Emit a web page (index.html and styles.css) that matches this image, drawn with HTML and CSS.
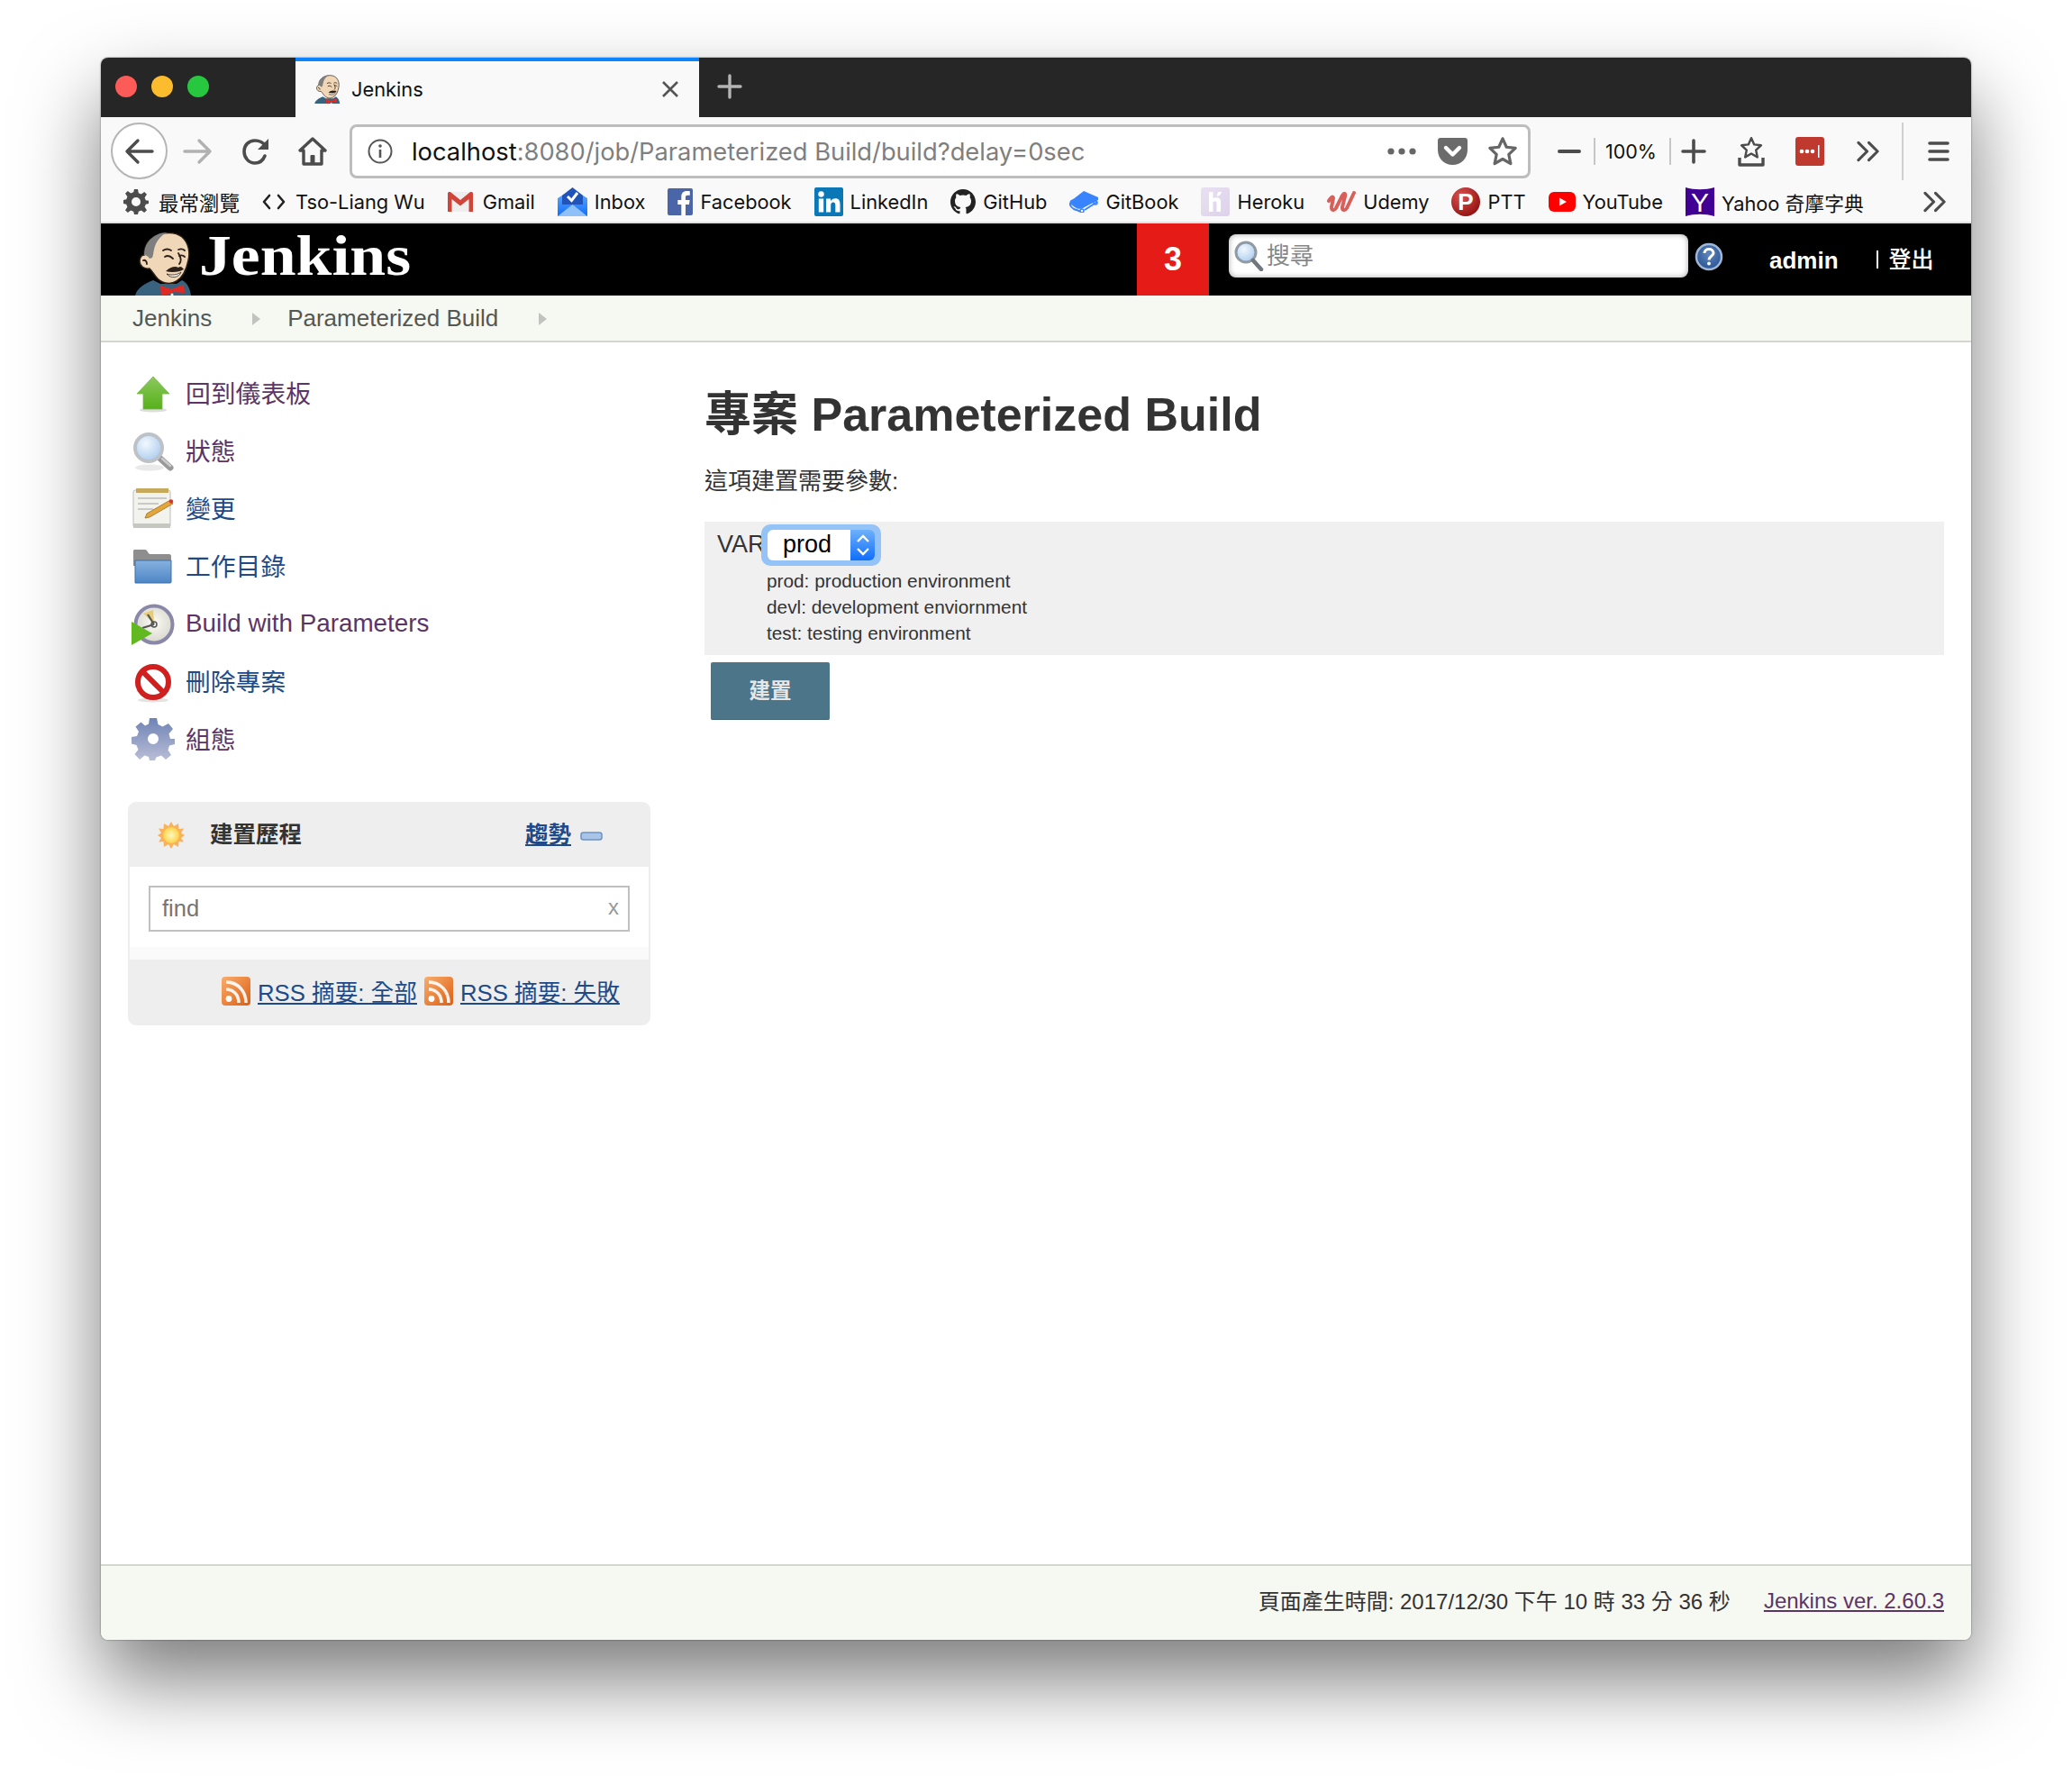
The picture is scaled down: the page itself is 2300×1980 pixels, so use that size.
FILE: index.html
```html
<!DOCTYPE html>
<html lang="zh-Hant">
<head>
    <meta charset="UTF-8">
    <title>Jenkins</title>
    <link rel="stylesheet" href="styles.css">
</head>
<body>
<svg class="defs" width="0" height="0">
    <defs>
        <linearGradient id="gGreen" x1="0" y1="0" x2="0" y2="1"><stop offset="0" stop-color="#8cc85e"/><stop offset="1" stop-color="#56b01a"/></linearGradient>
        <linearGradient id="gFolder" x1="0" y1="0" x2="0" y2="1"><stop offset="0" stop-color="#86b1de"/><stop offset="1" stop-color="#4d86c6"/></linearGradient>
        <linearGradient id="gGear" x1="0" y1="0" x2="0" y2="1"><stop offset="0" stop-color="#6f83b5"/><stop offset="1" stop-color="#b9bdd6"/></linearGradient>
        <linearGradient id="gRss" x1="0" y1="0" x2="1" y2="1"><stop offset="0" stop-color="#f9ad6c"/><stop offset="1" stop-color="#dc5f14"/></linearGradient>
        <linearGradient id="gBlue" x1="0" y1="0" x2="0" y2="1"><stop offset="0" stop-color="#5da7fb"/><stop offset="1" stop-color="#0f6efb"/></linearGradient>
        <linearGradient id="gHero" x1="0" y1="0" x2="1" y2="1"><stop offset="0" stop-color="#e9e1f2"/><stop offset="1" stop-color="#ddd2ea"/></linearGradient>
        <radialGradient id="gLens" cx=".4" cy=".35" r=".7"><stop offset="0" stop-color="#f2f8fe"/><stop offset="1" stop-color="#a9cbee"/></radialGradient>
        <radialGradient id="gSun" cx=".5" cy=".5" r=".5"><stop offset="0" stop-color="#fff9c4"/><stop offset="1" stop-color="#fbd348"/></radialGradient>
        <radialGradient id="gPtt" cx=".35" cy=".3" r=".8"><stop offset="0" stop-color="#d9534f"/><stop offset="1" stop-color="#8e0d0d"/></radialGradient>
        <radialGradient id="gHelp" cx=".5" cy=".4" r=".6"><stop offset="0" stop-color="#5f86bc"/><stop offset="1" stop-color="#2a5494"/></radialGradient>
        <radialGradient id="gClock" cx=".5" cy=".45" r=".55"><stop offset="0" stop-color="#fbfaf4"/><stop offset="1" stop-color="#d9d8cf"/></radialGradient>
        <symbol id="butler" viewBox="0 0 65 71">
            <path fill="#38627e" d="M2 71C4 63 12 58 22 54L30 58H48L54 54C60 57 63 63 64 71Z"/>
            <path fill="#f0d7b8" stroke="#2b1f18" stroke-width="1.500" d="M16 12C24 1 44-2 54 6C62 13 63 24 61 32C59 42 56 50 48 55C40 60 30 57 25 50C22 46 20 43 18 41C12 42 7 38 7 33C7 28 10 26 12 26C12 21 13 16 16 12Z"/>
            <path fill="#7f7f7f" d="M16 12C22 4 30 1 38 1C31 4 25 10 23 20C22 24 22 27 21 29L18 30C16 27 14 26 12 26C12 21 13 16 16 12Z"/>
            <path fill="none" stroke="#2b1f18" stroke-width="1.800" stroke-linecap="round" d="M33 21C36 19 39 19 42 21M50 20C53 19 55 19 57 21M35 28C38 26 41 27 44 30M51 27C53 26 55 26 57 28M50 24C53 29 54 33 51 36M11 32C13 31 15 33 15 36"/>
            <path fill="#2b1f18" d="M36 44C41 39 47 38 50 40C52 38 54 39 56 42C51 45 43 46 36 44Z"/>
            <path fill="#f7f7f2" stroke="#2b1f18" stroke-width=".8" d="M37 47C43 49 49 48 53 45C51 51 42 53 37 47Z"/>
            <path fill="#e12a22" d="M30 60L42 64L56 59L57 68L44 67L42 69L31 71Z"/>
            <circle cx="43" cy="70" r="1.500" fill="#eee"/>
        </symbol>
        <symbol id="bigstar" viewBox="0 0 36 36"><path fill="none" stroke="currentColor" stroke-width="3.400" stroke-linejoin="round" d="M18 3L22.500 13L33 14.200L25.200 21.600L27.400 32.400L18 27L8.600 32.400L10.800 21.600L3 14.200L13.500 13Z"/></symbol>
        <symbol id="chevrons" viewBox="0 0 28 24"><path fill="none" stroke="#4d4d4d" stroke-width="3.200" stroke-linecap="round" stroke-linejoin="round" d="M2 2L12 12L2 22M14 2L24 12L14 22"/></symbol>
        <symbol id="rss" viewBox="0 0 32 32">
            <rect width="32" height="32" rx="4" fill="url(#gRss)"/>
            <circle cx="8" cy="24.500" r="3.400" fill="#fff"/>
            <path fill="none" stroke="#fff" stroke-width="3.600" d="M5 14C13 14 19 20 19 29M5 6C18 6 27 16 27 29" opacity=".9"/>
        </symbol>
    </defs>
</svg>

<div class="window">
    <div class="tabbar">
        <div class="lights">
            <span class="light red"></span>
            <span class="light yellow"></span>
            <span class="light green"></span>
        </div>
        <div class="tab">
            <svg class="favicon" width="30" height="32"><use href="#butler"/></svg>
            <span class="tab-title">Jenkins</span>
            <svg class="tab-close" width="20" height="20" viewBox="0 0 20 20"><path stroke="#555" stroke-width="2.600" d="M2 2L18 18M18 2L2 18"/></svg>
        </div>
        <svg class="newtab" width="28" height="28" viewBox="0 0 28 28"><path stroke="#b4b4b4" stroke-width="3.400" stroke-linecap="round" d="M14 2V26M2 14H26"/></svg>
    </div>

    <div class="toolbar">
        <div class="backbtn">
            <svg width="34" height="30" viewBox="0 0 34 30"><path fill="none" stroke="#4c4c4c" stroke-width="3.400" stroke-linecap="round" stroke-linejoin="round" d="M31 15H3M15 3L3 15L15 27"/></svg>
        </div>
        <svg class="tb-fwd" width="34" height="30" viewBox="0 0 34 30"><path fill="none" stroke="#b1b1b1" stroke-width="3.400" stroke-linecap="round" stroke-linejoin="round" d="M3 15H31M19 3L31 15L19 27"/></svg>
        <svg class="tb-reload" width="32" height="32" viewBox="0 0 32 32"><path fill="none" stroke="#4c4c4c" stroke-width="3.600" stroke-linecap="round" d="M26 21C24 26 20 29 15 29C8 29 3 23 3 16C3 9 8 4 15 4C20 4 24 6 27 10"/><path fill="#4c4c4c" d="M30 2V14H18Z"/></svg>
        <svg class="tb-home" width="32" height="32" viewBox="0 0 32 32"><path fill="none" stroke="#4c4c4c" stroke-width="3.400" stroke-linejoin="round" d="M2 15L16 2L30 15H26V30H6V15Z"/><rect x="13.500" y="20" width="5" height="10" rx="1" fill="#4c4c4c"/></svg>
        <div class="urlbar">
            <svg class="info" width="30" height="30" viewBox="0 0 30 30"><circle cx="15" cy="15" r="12.500" fill="none" stroke="#555" stroke-width="2"/><circle cx="15" cy="9" r="1.800" fill="#555"/><path stroke="#555" stroke-width="2.600" d="M15 13V22"/></svg>
            <span class="url"><b>localhost</b>:8080/job/Parameterized Build/build?delay=0sec</span>
            <svg class="ub-dots" width="32" height="8" viewBox="0 0 32 8"><circle cx="4" cy="4" r="3.600" fill="#666"/><circle cx="16" cy="4" r="3.600" fill="#666"/><circle cx="28" cy="4" r="3.600" fill="#666"/></svg>
            <svg class="ub-pocket" width="33" height="30" viewBox="0 0 33 30"><path fill="#6b6b6b" d="M3 0H30C32 0 33 1 33 3V13C33 23 26 30 16.500 30C7 30 0 23 0 13V3C0 1 1 0 3 0Z"/><path fill="none" stroke="#fff" stroke-width="4.400" stroke-linecap="round" stroke-linejoin="round" d="M9 11L16.500 18.500L24 11"/></svg>
            <svg class="ub-star" width="34" height="34"><use href="#bigstar"/></svg>
        </div>
        <svg class="zm-minus" width="26" height="4" viewBox="0 0 26 4"><rect width="26" height="4" rx="2" fill="#4c4c4c"/></svg>
        <span class="zm-sep"></span>
        <span class="zm-val">100%</span>
        <span class="zm-sep"></span>
        <svg class="zm-plus" width="28" height="28" viewBox="0 0 28 28"><path stroke="#4c4c4c" stroke-width="3.600" stroke-linecap="round" d="M14 2V26M2 14H26"/></svg>
        <svg class="tb-lib" width="30" height="34" viewBox="0 0 30 34"><use href="#bigstar" width="26" height="26" x="2" y="0"/><path fill="none" stroke="#4c4c4c" stroke-width="3.400" stroke-linejoin="round" d="M2 24V32H28V24"/></svg>
        <svg class="tb-lp" width="32" height="32" viewBox="0 0 32 32"><rect width="32" height="32" rx="3" fill="#c0392f"/><circle cx="7" cy="16" r="2.300" fill="#fff"/><circle cx="13" cy="16" r="2.300" fill="#fff"/><circle cx="19" cy="16" r="2.300" fill="#fff"/><rect x="25" y="9" width="1.500" height="14" fill="#fff"/></svg>
        <svg class="tb-more" width="27" height="24"><use href="#chevrons"/></svg>
        <span class="tb-sep"></span>
        <svg class="tb-menu" width="24" height="22" viewBox="0 0 24 22"><path stroke="#4c4c4c" stroke-width="3.600" stroke-linecap="round" d="M2 2H22M2 11H22M2 20H22"/></svg>
    </div>

    <div class="bookmarks">
        <span class="bm bm-wide">
            <svg class="bm-gear" width="28" height="28" viewBox="0 0 28 28"><path fill="#4c4c4c" fill-rule="evenodd" d="M12 0H16L16.800 4.200L19.800 5.400L23.300 3L26 5.800L23.600 9.200L24.800 12.200L28 12.800V16L24.800 16.800L23.600 19.800L26 23.200L23.200 26L19.800 23.600L16.800 24.800L16 28H12L11.200 24.800L8.200 23.600L4.800 26L2 23.200L4.400 19.800L3.200 16.800L0 16V12L3.200 11.200L4.400 8.200L2 4.800L4.800 2L8.200 4.400L11.200 3.200ZM14 9A5 5 0 1 0 14 19A5 5 0 1 0 14 9Z"/></svg>
            <span class="bm-cjk">最常瀏覽</span>
        </span>
        <span class="bm bm-wide">
            <svg class="bm-code" width="26" height="20" viewBox="0 0 26 20"><path fill="none" stroke="#222" stroke-width="2.600" stroke-linecap="round" stroke-linejoin="round" d="M8 3L2 10L8 17M18 3L24 10L18 17"/></svg>
            Tso-Liang Wu
        </span>
        <span class="bm bm-wide">
            <svg width="28" height="22" viewBox="0 0 28 22"><rect width="28" height="22" rx="2" fill="#eee"/><path fill="#d0443a" d="M0 2C0 0 2-.5 3.500.5L14 9L24.500.5C26-.5 28 0 28 2V22H23.500V8L14 15.500L4.500 8V22H0Z"/></svg>
            Gmail
        </span>
        <span class="bm">
            <svg width="33" height="32" viewBox="0 0 33 32"><path fill="url(#gBlue)" d="M0 12L8 7V19H25V7L33 12V32H0Z"/><path fill="#8fc1f8" d="M0 32L16.500 19L33 32Z"/><path fill="#2154b9" d="M16.500 0L28 9V19H5V9Z"/><path fill="none" stroke="#fff" stroke-width="3" d="M11 10L15.500 14.500L22 6"/></svg>
            Inbox
        </span>
        <span class="bm">
            <svg width="28" height="30" viewBox="0 0 28 30"><rect width="28" height="30" rx="2" fill="#4a66a8"/><path fill="#fff" d="M20 30V18H24L24.600 13H20V10C20 8.600 20.400 7.700 22.400 7.700H24.800V3.300C24.400 3.200 23 3 21.300 3C17.700 3 15.300 5.200 15.300 9.200V13H11.300V18H15.300V30Z"/></svg>
            Facebook
        </span>
        <span class="bm">
            <svg width="32" height="32" viewBox="0 0 32 32"><rect width="32" height="32" rx="2" fill="#0a77b7"/><circle cx="7.500" cy="7.500" r="3.200" fill="#fff"/><rect x="4.800" y="12.500" width="5.400" height="15" fill="#fff"/><path fill="#fff" d="M13 12.500H18V15C19 13.300 21 12.200 23.200 12.200C27.300 12.200 28.500 14.900 28.500 18.800V27.500H23.300V19.800C23.300 17.800 22.700 16.500 21 16.500C19 16.500 18.200 17.900 18.200 19.800V27.500H13Z"/></svg>
            LinkedIn
        </span>
        <span class="bm">
            <svg width="28" height="30" viewBox="0 0 28 30"><path fill="#222" d="M14 1C6.300 1 0 7.300 0 15C0 21.200 4 26.400 9.600 28.300C10.300 28.400 10.500 28 10.500 27.600V25C6.600 25.900 5.800 23.300 5.800 23.300C5.200 21.700 4.200 21.200 4.200 21.200C3 20.300 4.300 20.300 4.300 20.300C5.700 20.400 6.400 21.700 6.400 21.700C7.600 23.800 9.700 23.200 10.500 22.800C10.600 21.900 11 21.300 11.400 21C8.300 20.600 5 19.400 5 14C5 12.500 5.500 11.200 6.400 10.200C6.300 9.800 5.800 8.400 6.500 6.400C6.500 6.400 7.700 6 10.400 7.900C11.500 7.600 12.800 7.400 14 7.400C15.200 7.400 16.500 7.600 17.600 7.900C20.300 6 21.500 6.400 21.500 6.400C22.200 8.400 21.700 9.800 21.600 10.200C22.500 11.200 23 12.500 23 14C23 19.400 19.700 20.600 16.600 21C17.100 21.400 17.500 22.300 17.500 23.500V27.600C17.500 28 17.700 28.400 18.400 28.300C24 26.400 28 21.200 28 15C28 7.300 21.700 1 14 1Z"/></svg>
            GitHub
        </span>
        <span class="bm">
            <svg width="32" height="24" viewBox="0 0 32 24"><path fill="#3884ff" d="M16 0L32 7V10L15 19C12 20.500 9 20 6 18L2 15C0 13.500 0 11 2 10L5 8.500Z"/><path fill="none" stroke="#3884ff" stroke-width="2" d="M1 13C0 16 2 18 5 20L12 22.500M17 21L31 12"/><circle cx="14" cy="22" r="2" fill="none" stroke="#3884ff" stroke-width="1.500"/><circle cx="29" cy="13" r="2" fill="none" stroke="#3884ff" stroke-width="1.500"/></svg>
            GitBook
        </span>
        <span class="bm">
            <svg width="32" height="32" viewBox="0 0 32 32"><rect width="32" height="32" rx="3" fill="url(#gHero)"/><path fill="#fff" d="M9 5H13.500V12C17 10.800 22 11 22 15.500V27H17.500V17.500C17.500 15 15 15.500 13.500 16V27H9ZM19 5H23C22.500 7 21 8.500 19.500 9.500H17.500C18.300 8 18.800 6.500 19 5Z"/></svg>
            Heroku
        </span>
        <span class="bm">
            <svg width="32" height="26" viewBox="0 0 32 26"><path fill="none" stroke="#d9605a" stroke-width="4" stroke-linecap="round" d="M2 12C4 8 7 6 7 9L5 19C5 23 8 23 10 20L17 6C19 3 21 3 20 7L17 19C16.500 23 20 23 22 20L30 3"/></svg>
            Udemy
        </span>
        <span class="bm">
            <svg width="32" height="32" viewBox="0 0 32 32"><circle cx="16" cy="16" r="16" fill="url(#gPtt)"/><text class="ico-p" x="16" y="25">P</text></svg>
            PTT
        </span>
        <span class="bm">
            <svg width="30" height="22" viewBox="0 0 30 22"><rect width="30" height="22" rx="6" fill="#f00"/><path fill="#fff" d="M12 6.500L20 11L12 15.500Z"/></svg>
            YouTube
        </span>
        <span class="bm">
            <svg width="32" height="32" viewBox="0 0 32 32"><path fill="#410093" d="M0 0C10 3 22 3 32 0V32C22 29 10 29 0 32Z"/><text class="ico-y" x="16" y="27">Y</text></svg>
            Yahoo 奇摩字典
        </span>
        <svg class="bm-more" width="27" height="24"><use href="#chevrons"/></svg>
    </div>

    <div class="jk-header">
        <div class="jk-logo">
            <svg class="jk-butler" width="65" height="71"><use href="#butler"/></svg>
            <span class="jk-name">Jenkins</span>
        </div>
        <span class="jk-badge">3</span>
        <div class="jk-search">
            <svg width="34" height="34" viewBox="0 0 34 34"><circle cx="14" cy="13" r="11" fill="url(#gLens)" stroke="#8f9aa3" stroke-width="3"/><path stroke="#70777d" stroke-width="4.500" stroke-linecap="round" d="M22 22L31 32"/></svg>
            <span class="jk-placeholder">搜尋</span>
        </div>
        <svg class="jk-help" width="32" height="32" viewBox="0 0 32 32"><circle cx="16" cy="16" r="14" fill="url(#gHelp)" stroke="#9fb6d6" stroke-width="2.500"/><path fill="none" stroke="#fff" stroke-width="3" d="M11 12C11 9 13.500 7.500 16 7.500C18.500 7.500 21 9 21 12C21 15 16 15.500 16 19.500"/><circle cx="16" cy="23.500" r="1.900" fill="#fff"/></svg>
        <b class="jk-user">admin</b>
        <span class="jk-logout">登出</span>
    </div>

    <div class="crumbs">
        <span>Jenkins</span>
        <i class="crumb-arrow"></i>
        <span>Parameterized Build</span>
        <i class="crumb-arrow"></i>
    </div>

    <div class="page">
        <div class="side">
            <div class="tasks">
                <a class="task visited">
                    <svg width="48" height="48" viewBox="0 0 48 48"><ellipse cx="24" cy="43" rx="15" ry="2.500" fill="#ddd"/><path fill="url(#gGreen)" stroke="#7ab84a" stroke-width=".8" d="M24 6L42 25H34V42H13V25H6Z"/></svg>
                    <span class="cjk">回到儀表板</span>
                </a>
                <a class="task visited">
                    <svg width="48" height="48" viewBox="0 0 48 48"><ellipse cx="20" cy="43" rx="16" ry="3.500" fill="#e9e9e9"/><path stroke="#999" stroke-width="7" stroke-linecap="round" d="M32 33L43 43"/><path stroke="#ccc" stroke-width="2.500" stroke-linecap="round" d="M34 33L43 41"/><circle cx="19" cy="21" r="15" fill="url(#gLens)" stroke="#bcc2c8" stroke-width="4"/></svg>
                    <span class="cjk">狀態</span>
                </a>
                <a class="task">
                    <svg width="48" height="48" viewBox="0 0 48 48"><rect x="2" y="4" width="41" height="41" rx="2" fill="#f3f3ee" stroke="#bbb"/><rect x="5" y="2" width="36" height="5" fill="#c6a95a"/><path stroke="#c9c9c9" stroke-width="2" d="M7 13H39M7 19H30M7 25H24"/><path fill="#e4a63b" stroke="#9c6d1f" stroke-width=".8" d="M43 15L46 19L20 34L15 35L17 30Z"/><circle cx="44" cy="16.500" r="2.200" fill="#d8352a"/><rect x="2" y="41" width="41" height="5" fill="#c7c7c2"/></svg>
                    <span class="cjk">變更</span>
                </a>
                <a class="task">
                    <svg width="48" height="48" viewBox="0 0 48 48"><path fill="#8e8e8e" d="M2 8C2 6 3 6 4 6H15C18 6 18 11 21 11H42C43 11 44 12 44 13V24H2Z"/><path fill="url(#gFolder)" stroke="#3f6ea5" d="M4 18H44V42C44 42.500 43.500 43 43 43H4Z"/></svg>
                    <span class="cjk">工作目錄</span>
                </a>
                <a class="task visited">
                    <svg width="48" height="48" viewBox="0 0 48 48"><circle cx="25" cy="25" r="20.500" fill="url(#gClock)" stroke="#8a88a8" stroke-width="4"/><path fill="#e7cc72" d="M25 24L13 13L24 9Z"/><path stroke="#555" stroke-width="2.200" d="M25 25L18 14M25 25L12 29"/><circle cx="25" cy="25" r="3" fill="none" stroke="#555" stroke-width="1.500"/><path fill="#62b81f" d="M0 22L23 35L0 48Z"/></svg>
                    Build with Parameters
                </a>
                <a class="task">
                    <svg width="48" height="48" viewBox="0 0 48 48"><ellipse cx="24" cy="45" rx="17" ry="2.500" fill="#e3e3e3"/><circle cx="24" cy="25" r="17" fill="#fff" stroke="#cf1f1f" stroke-width="6"/><path stroke="#cf1f1f" stroke-width="6" d="M12 13L36 37"/></svg>
                    <span class="cjk">刪除專案</span>
                </a>
                <a class="task visited">
                    <svg width="48" height="48" viewBox="0 0 48 48"><path fill="url(#gGear)" fill-rule="evenodd" d="M20 1H28L29.500 8L34.500 10.500L41 7L46 13L41.500 18.500L43 24H48V30L42 31.500L40.500 36.500L44 42L38 47L33 42.500L27.500 44.500L26 48H20L19 44L14.500 42.500L9 47L3.500 41L7.500 36L5.500 31L0 29.500V22L6 21L8 16L4.500 10.500L10.500 5.500L15 9.500L19 7.500ZM24 18A6 6 0 1 0 24 30A6 6 0 1 0 24 18Z"/></svg>
                    <span class="cjk">組態</span>
                </a>
            </div>
            <div class="pane">
                <div class="pane-head">
                    <svg class="pane-sun" width="30" height="30" viewBox="0 0 30 30"><path fill="#f9b25a" d="M15 0L18 5L23 2L23.500 8L29 7.500L26 12.500L30 15L26 18L29 22.500L23.500 22L23 28L18 25L15 30L12 25L7 28L6.500 22L1 22.500L4 18L0 15L4 12.500L1 7.500L6.500 8L7 2L12 5Z"/><circle cx="15" cy="15" r="9" fill="url(#gSun)"/></svg>
                    <b class="pane-title">建置歷程</b>
                    <a class="pane-trend">趨勢</a>
                    <svg class="pane-min" width="25" height="10" viewBox="0 0 25 10"><rect x="1" y="1" width="23" height="8" rx="2.500" fill="#a9c4e6" stroke="#6d93c6" stroke-width="1.500"/></svg>
                </div>
                <div class="pane-body">
                    <div class="find"><span>find</span><span class="find-x">x</span></div>
                </div>
                <div class="pane-gap"></div>
                <div class="pane-foot">
                    <svg width="32" height="32"><use href="#rss"/></svg>
                    <a>RSS 摘要: 全部</a>
                    <svg width="32" height="32"><use href="#rss"/></svg>
                    <a>RSS 摘要: 失敗</a>
                </div>
            </div>
        </div>

        <div class="main">
            <h1>專案 Parameterized Build</h1>
            <p class="lead">這項建置需要參數:</p>
            <div class="param">
                <div class="param-row">
                    <span class="param-name">VAR</span>
                    <div class="select">
                        <span class="select-val">prod</span>
                        <span class="select-btn">
                            <svg width="18" height="28" viewBox="0 0 18 28"><path fill="none" stroke="#fff" stroke-width="2.400" d="M3 10L9 4L15 10M3 18L9 24L15 18"/></svg>
                        </span>
                    </div>
                </div>
                <div class="param-desc">
                    <div>prod: production environment</div>
                    <div>devl: development enviornment</div>
                    <div>test: testing environment</div>
                </div>
            </div>
            <button class="build-btn">建置</button>
        </div>
    </div>

    <div class="footer">
        <span class="footer-time">頁面產生時間: 2017/12/30 下午 10 時 33 分 36 秒</span>
        <a>Jenkins ver. 2.60.3</a>
    </div>
</div>
</body>
</html>
```

FILE: styles.css
```css
* {
    box-sizing: border-box;
}
html, body {
    margin: 0;
    padding: 0;
}
body {
    width: 2300px;
    height: 1980px;
    padding: 64px 112px 160px;
    background: #fff;
    font-family: "Liberation Sans", "Noto Sans CJK TC", sans-serif;
    color: #333;
    overflow: hidden;
}
.defs {
    position: absolute;
}
svg {
    flex: none;
    display: block;
}
.window {
    display: flex;
    flex-direction: column;
    height: 1756px;
    border-radius: 8px;
    overflow: hidden;
    background: #fff;
    box-shadow: 0 0 2px rgba(0, 0, 0, .55), 0 44px 88px rgba(0, 0, 0, .52);
}

/* tab strip */
.tabbar {
    height: 66px;
    background: #262626;
    display: flex;
    align-items: stretch;
    flex: none;
}
.lights {
    width: 216px;
    display: flex;
    gap: 16px;
    padding: 20px 0 0 16px;
}
.light {
    width: 24px;
    height: 24px;
    border-radius: 50%;
}
.light.red { background: #fc5b57; }
.light.yellow { background: #fdbc2e; }
.light.green { background: #27c83f; }
.tab {
    width: 448px;
    background: #f9f9f9;
    border-top: 4px solid #0a84ff;
    display: flex;
    align-items: center;
    padding: 0 22px 0 20px;
}
.favicon {
    margin-right: 12px;
}
.tab-title {
    font: 21.800px Inter, sans-serif;
    color: #111;
    flex: 1;
}
.newtab {
    margin: 18px 0 0 20px;
}

/* nav toolbar */
.toolbar {
    height: 70px;
    background: #f9f9f9;
    display: flex;
    align-items: center;
    flex: none;
    padding-top: 5px;
}
.backbtn {
    width: 63px;
    height: 63px;
    margin-left: 11px;
    border: 2px solid #b5b5b5;
    border-radius: 50%;
    background: #fff;
    display: flex;
    align-items: center;
    justify-content: center;
}
.tb-fwd { margin-left: 16px; }
.tb-reload { margin-left: 32px; }
.tb-home { margin-left: 31px; }
.urlbar {
    width: 1311px;
    height: 60px;
    margin-left: 25px;
    background: #fff;
    border: 3px solid #bdbdbd;
    border-radius: 8px;
    display: flex;
    align-items: center;
    padding-left: 16px;
}
.url {
    font: 27.300px Inter, sans-serif;
    color: #7f7f7f;
    margin: 2px 0 0 20px;
    flex: 1;
    white-space: nowrap;
}
.url b {
    font-weight: 400;
    color: #111;
}
.ub-pocket { margin-left: 24px; }
.ub-star { margin: 0 11px 0 22px; color: #666; }
.zm-minus { margin-left: 30px; }
.zm-sep {
    width: 2px;
    height: 30px;
    background: #c6c6c6;
    margin: 0 11px 0 14px;
}
.zm-val {
    font: 21.500px Inter, sans-serif;
    color: #111;
}
.tb-lib { margin-left: 35px; color: #4c4c4c; }
.tb-lp { margin-left: 34px; }
.tb-more { margin-left: 36px; }
.tb-sep {
    width: 2px;
    height: 64px;
    background: #d0d0d0;
    margin: 0 27px 0 23px;
}

/* bookmarks */
.bookmarks {
    height: 48px;
    background: #f9f9f9;
    border-bottom: 2px solid #e2e2e2;
    display: flex;
    align-items: center;
    gap: 25px;
    padding: 2px 26px 0 25px;
    flex: none;
    font: 21.800px Inter, "Noto Sans CJK TC", sans-serif;
    color: #111;
}
.bm {
    display: flex;
    align-items: center;
    gap: 8px;
    white-space: nowrap;
}
.bm-wide {
    gap: 11px;
}
.bm-cjk {
    font-size: 22.500px;
}
.bm-more {
    margin-left: auto;
}
.ico-p, .ico-y {
    fill: #fff;
    font-family: "Liberation Sans", sans-serif;
    font-weight: 700;
    text-anchor: middle;
}
.ico-p { font-size: 26px; }
.ico-y { font-size: 30px; font-weight: 400; }

/* jenkins header */
.jk-header {
    height: 80px;
    background: #000;
    display: flex;
    align-items: center;
    flex: none;
    color: #fff;
}
.jk-logo {
    width: 1150px;
    display: flex;
    align-items: flex-end;
    height: 100%;
    padding-left: 36px;
}
.jk-butler {
    margin-right: 8px;
}
.jk-name {
    font: 700 64px "Liberation Serif", serif;
    line-height: 75px;
    margin-bottom: 7px;
    transform: scaleX(1.12);
    transform-origin: left;
}
.jk-badge {
    width: 80px;
    height: 100%;
    background: #e41b17;
    font-size: 36px;
    font-weight: 700;
    display: flex;
    align-items: center;
    justify-content: center;
}
.jk-search {
    width: 510px;
    height: 48px;
    margin: -8px 0 0 22px;
    background: #fff;
    border-radius: 8px;
    box-shadow: inset 0 0 6px rgba(0, 0, 0, .35);
    display: flex;
    align-items: center;
    padding-left: 5px;
    gap: 3px;
    font-size: 26px;
    color: #888;
}
.jk-placeholder {
    margin-top: -6px;
}
.jk-help {
    margin: -6px 0 0 7px;
}
.jk-user {
    font-size: 26px;
    margin: 2px 0 0 51px;
}
.jk-logout {
    font-size: 25px;
    font-weight: 500;
    margin-left: 42px;
    padding-left: 12px;
    border-left: 2px solid #fff;
    line-height: 20px;
}

/* breadcrumb */
.crumbs {
    height: 52px;
    background: #f6f8f2;
    border-bottom: 2px solid #d3d7cf;
    display: flex;
    align-items: center;
    padding-left: 35px;
    font-size: 26px;
    color: #555753;
    flex: none;
}
.crumb-arrow {
    width: 0;
    height: 0;
    border-left: 9px solid #c2c2be;
    border-top: 7px solid transparent;
    border-bottom: 7px solid transparent;
    margin: 2px 30px 0 45px;
}

/* content */
.page {
    flex: 1;
    display: flex;
}
.side {
    width: 610px;
    padding: 24px 0 0 30px;
    flex: none;
}
.tasks {
    padding-left: 4px;
}
.task {
    height: 64px;
    display: flex;
    align-items: center;
    gap: 12px;
    font-size: 27.800px;
    color: #204a87;
}
.task.visited {
    color: #5c3566;
}
.task .cjk {
    margin-top: -3px;
}
.pane {
    margin-top: 38px;
    background: #eee;
    border: 2px solid #eee;
    border-radius: 9px;
}
.pane-head {
    height: 70px;
    display: flex;
    align-items: center;
    padding-left: 31px;
    font-size: 25.500px;
}
.pane-title {
    margin: -8px 0 0 28px;
    flex: 1;
}
.pane-trend {
    margin-top: -8px;
    font-weight: 700;
    color: #204a87;
    text-decoration: underline;
}
.pane-min {
    margin: 2px 51px 0 10px;
}
.pane-body {
    height: 89px;
    background: #fff;
    padding-top: 21px;
}
.find {
    width: 534px;
    height: 51px;
    margin-left: 21px;
    border: 2px solid #c0c0c0;
    display: flex;
    align-items: center;
    justify-content: space-between;
    padding: 0 10px 0 13px;
    font-size: 25.500px;
    color: #757575;
}
.find-x {
    margin-top: -3px;
    color: #999;
    font-size: 24px;
}
.pane-gap {
    height: 14px;
    background: #fafafa;
}
.pane-foot {
    height: 71px;
    display: flex;
    align-items: center;
    padding: 0 30px 2px 102px;
    gap: 8px;
    font-size: 25.700px;
    color: #204a87;
    white-space: nowrap;
}
.pane-foot a {
    text-decoration: underline;
}
.main {
    flex: 1;
    margin-left: 60px;
    padding-right: 30px;
}
h1 {
    margin: 50px 0 0;
    font-size: 52px;
    line-height: 60px;
    color: #333;
}
.lead {
    margin: 26px 0 0;
    font-size: 26px;
    line-height: 36px;
}
.param {
    margin-top: 27px;
    height: 148px;
    background: #f0f0f0;
    padding: 3px 0 0 14px;
}
.param-row {
    display: flex;
    align-items: center;
}
.param-name {
    font-size: 27px;
    width: 49px;
    margin-top: -2px;
}
.select {
    width: 133px;
    height: 46px;
    border-radius: 10px;
    background: #94c3f7;
    padding: 6px 7px;
    display: flex;
}
.select-val {
    flex: 1;
    background: #fff;
    border-radius: 6px 0 0 6px;
    font-size: 27px;
    line-height: 32px;
    padding-left: 17px;
    color: #000;
}
.select-btn {
    width: 27px;
    background: linear-gradient(#6fb1fb, #0f6efb);
    border-radius: 0 6px 6px 0;
    display: flex;
    align-items: center;
    justify-content: center;
}
.param-desc {
    margin: 2px 0 0 55px;
    font-size: 20.800px;
    line-height: 29px;
}
.build-btn {
    display: block;
    width: 132px;
    height: 64px;
    margin: 8px 0 0 7px;
    padding-bottom: 4px;
    background: #4d758a;
    border: 0;
    border-bottom: 1px solid #3f6478;
    border-radius: 2px;
    color: #e6e6e6;
    font: 700 23.500px "Liberation Sans", "Noto Sans CJK TC", sans-serif;
}

/* footer */
.footer {
    height: 84px;
    background: #f6f8f2;
    border-top: 2px solid #d3d7cf;
    display: flex;
    align-items: center;
    justify-content: flex-end;
    gap: 37px;
    padding: 0 30px 6px 0;
    font-size: 24px;
    flex: none;
}
.footer-time {
    margin-top: -2px;
}
.footer a {
    margin-top: 2px;
    color: #5c3566;
    text-decoration: underline;
}
```
